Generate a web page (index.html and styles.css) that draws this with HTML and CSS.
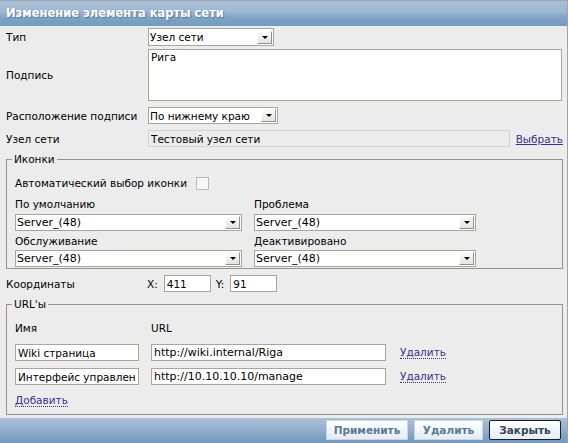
FILE: index.html
```html
<!DOCTYPE html>
<html lang="ru">
<head>
    <meta charset="UTF-8">
    <title>Изменение элемента карты сети</title>
    <link rel="stylesheet" href="styles.css">
</head>
<body>

<div class="dialog">
    <div class="dialog-head">Изменение элемента карты сети</div>

    <form class="dialog-body">
        <div class="row row-type">
            <label class="row-label">Тип</label>
            <div class="select w-type">
                <select><option>Узел сети</option></select>
                <span class="select-btn"></span>
            </div>
        </div>

        <div class="row row-caption">
            <label class="row-label">Подпись</label>
            <textarea class="caption">Рига</textarea>
        </div>

        <div class="row row-pos">
            <label class="row-label">Расположение подписи</label>
            <div class="select w-pos">
                <select><option>По нижнему краю</option></select>
                <span class="select-btn"></span>
            </div>
        </div>

        <div class="row row-host">
            <label class="row-label">Узел сети</label>
            <input type="text" class="readonly" value="Тестовый узел сети" readonly>
            <a href="#" class="link">Выбрать</a>
        </div>

        <fieldset class="icons">
            <legend>Иконки</legend>
            <div class="auto">
                <span>Автоматический выбор иконки</span>
                <input type="checkbox" class="check">
            </div>
            <div class="icon-grid">
                <div>
                    <div class="cell-label">По умолчанию</div>
                    <div class="select w-icon1">
                        <select><option>Server_(48)</option></select>
                        <span class="select-btn"></span>
                    </div>
                </div>
                <div>
                    <div class="cell-label">Проблема</div>
                    <div class="select w-icon2">
                        <select><option>Server_(48)</option></select>
                        <span class="select-btn"></span>
                    </div>
                </div>
                <div>
                    <div class="cell-label second">Обслуживание</div>
                    <div class="select w-icon1 second">
                        <select><option>Server_(48)</option></select>
                        <span class="select-btn"></span>
                    </div>
                </div>
                <div>
                    <div class="cell-label second">Деактивировано</div>
                    <div class="select w-icon2 second">
                        <select><option>Server_(48)</option></select>
                        <span class="select-btn"></span>
                    </div>
                </div>
            </div>
        </fieldset>

        <div class="row row-coords">
            <label class="row-label coords-label">Координаты</label>
            <span class="axis">X:</span>
            <input type="text" class="text coord" value="411">
            <span class="axis">Y:</span>
            <input type="text" class="text coord" value="91">
        </div>

        <fieldset class="urls">
            <legend>URL'ы</legend>
            <div class="url-grid">
                <div class="url-head">Имя</div>
                <div class="url-head">URL</div>
                <div></div>

                <input type="text" class="text url-name" value="Wiki страница">
                <input type="text" class="text url-value" value="http://wiki.internal/Riga">
                <a href="#" class="link dotted">Удалить</a>

                <input type="text" class="text url-name" value="Интерфейс управления">
                <input type="text" class="text url-value" value="http://10.10.10.10/manage">
                <a href="#" class="link dotted">Удалить</a>
            </div>
            <a href="#" class="link dotted add">Добавить</a>
        </fieldset>
    </form>

    <div class="dialog-foot">
        <button type="button" class="btn btn-apply">Применить</button>
        <button type="button" class="btn btn-delete">Удалить</button>
        <button type="button" class="btn btn-close">Закрыть</button>
    </div>
</div>

</body>
</html>
```

FILE: styles.css
```css
body {
    margin: 0;
    font-family: "DejaVu Sans", Verdana, sans-serif;
    font-size: 10.5px;
    color: #000;
    background: #ececec;
}

/* Окно диалога */
.dialog {
    width: 567px;
    height: 442px;
    border-top: 1px solid #a4a4a4;
    border-right: 1px solid #a4a4a4;
    background: #ececec;
    display: flex;
    flex-direction: column;
}

.dialog-head {
    height: 25px;
    line-height: 25px;
    padding-left: 6px;
    font-size: 11.5px;
    font-weight: bold;
    color: #fff;
    text-shadow: 1px 1px 1px #58799c;
    background: linear-gradient(#a6bfd8 0%, #9fb9d4 40%, #7ea2c6 70%, #739ac0 100%);
}

.dialog-body {
    flex: 1;
    margin: 0;
    padding: 2px 4px 0 6px;
}

/* Строки формы */
.row {
    display: flex;
    align-items: center;
}

.row-label {
    width: 142px;
    flex-shrink: 0;
}

.row-type { margin-bottom: 3px; }
.row-caption { margin-bottom: 6px; }
.row-pos { margin-bottom: 6px; }

/* Поля ввода */
.select {
    display: flex;
    align-items: center;
    box-sizing: border-box;
    height: 17px;
    border: 1px solid #a9a597;
    background: #fff;
}

.select select {
    flex: 1;
    min-width: 0;
    height: 100%;
    border: none;
    margin: 0;
    padding: 0 0 0 1px;
    background: transparent;
    font: inherit;
    color: #000;
    appearance: none;
    -webkit-appearance: none;
    outline: none;
}

.w-icon1 select,
.w-icon2 select {
    font-size: 11px;
}

.select-btn {
    position: relative;
    box-sizing: border-box;
    width: 15px;
    height: 13px;
    margin-right: 1px;
    border: 1px solid;
    border-color: #fff #8f8f8f #8f8f8f #fff;
    background: linear-gradient(#fafafa, #e4e4e4);
}

.select-btn::after {
    content: "";
    position: absolute;
    left: 4px;
    top: 4px;
    border-top: 3px solid #000;
    border-left: 3px solid transparent;
    border-right: 3px solid transparent;
}

.w-type { width: 126px; height: 18px; }
.w-pos { width: 130px; }
.w-icon1 { width: 227px; }
.w-icon2 { width: 222px; }

.caption {
    box-sizing: border-box;
    width: 414px;
    height: 52px;
    margin: 0;
    padding: 1px 2px;
    border: 1px solid #a9a597;
    font: inherit;
    resize: none;
    outline: none;
}

.text {
    box-sizing: border-box;
    height: 17px;
    margin: 0;
    padding: 0 2px;
    border: 1px solid #a9a597;
    background: #fff;
    font: inherit;
    color: #000;
    outline: none;
}

.url-value {
    font-size: 11px;
}

.readonly {
    box-sizing: border-box;
    width: 363px;
    height: 17px;
    margin: 0 6px 0 0;
    padding: 0 2px;
    border: 1px solid #d2d2d2;
    background: #ececec;
    font: inherit;
    color: #000;
    outline: none;
}

.link {
    color: #3b2f92;
}

.link.dotted {
    text-decoration: none;
    border-bottom: 1px dotted #3b2f92;
}

/* Блоки с рамкой */
fieldset {
    margin: 0;
    padding: 0 8px;
    min-width: 0;
    border: 1px solid #939393;
}

legend {
    padding: 0 2px;
    margin-left: -3px;
    line-height: 13px;
}

.icons {
    margin-top: 6px;
    padding-top: 10px;
    padding-bottom: 1px;
}

.auto {
    display: flex;
    align-items: center;
    height: 14px;
}

.check {
    appearance: none;
    -webkit-appearance: none;
    width: 13px;
    height: 13px;
    margin: 0 0 0 9px;
    border: 1px solid #b9b9b9;
    background: #f6f6f6;
}

.icon-grid {
    display: grid;
    grid-template-columns: 227px 222px;
    column-gap: 12px;
    margin-top: 8px;
}

.cell-label {
    line-height: 13px;
    margin-bottom: 3px;
}

.cell-label.second {
    margin-top: 4px;
    margin-bottom: 2px;
}

/* Координаты */
.row-coords {
    margin-top: 6px;
}

.coords-label {
    width: 141px;
}

.axis {
    margin-right: 6px;
}

.coord {
    width: 47px;
    margin-right: 5px;
}

/* Ссылки */
.urls {
    margin-top: 6px;
    padding-top: 11px;
    padding-bottom: 7px;
}

.url-grid {
    display: grid;
    grid-template-columns: 124px 235px auto;
    column-gap: 12px;
    row-gap: 7px;
    align-items: center;
    justify-items: start;
}

.url-head {
    line-height: 13px;
    margin-bottom: 2px;
}

.url-name { width: 124px; }
.url-value { width: 235px; }

.url-grid .link {
    margin-left: 2px;
}

.add {
    display: inline-block;
    margin-top: 9px;
    line-height: 12px;
}

/* Нижняя панель */
.dialog-foot {
    height: 25px;
    box-sizing: border-box;
    display: flex;
    justify-content: flex-end;
    gap: 6px;
    padding: 2px 6px 0 0;
    background: linear-gradient(#a9c1d9 0%, #98b3d0 40%, #7ea2c6 75%, #7399c0 100%);
}

.btn {
    height: 20px;
    box-sizing: border-box;
    padding: 0;
    border: 1px solid #c8d6e4;
    background: linear-gradient(#ffffff, #e4ecf4);
    font-family: inherit;
    font-size: 10.5px;
    font-weight: bold;
    color: #5b7898;
    cursor: pointer;
}

.btn-apply { width: 82px; }
.btn-delete { width: 69px; }

.btn-close {
    width: 72px;
    border-color: #1e1e1e;
    color: #34465a;
    border-radius: 2px;
}
```
